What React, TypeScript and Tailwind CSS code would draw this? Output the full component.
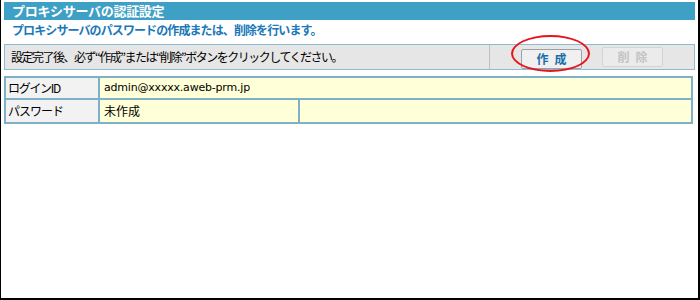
import React from 'react';

export default function App() {
  const font = { fontFamily: '"Noto Sans CJK JP", "Liberation Sans", sans-serif' };

  return (
    <div className="w-[700px] h-[300px] bg-white border-l border-r-2 border-b-2 border-black overflow-hidden" style={font}>
      <div className="pl-[3px] pr-[3px] pt-[2px]">
        {/* Title bar */}
        <div className="h-[18px] bg-[#3fa0c6] text-white font-bold text-[13px] leading-[18px] pl-[8px] tracking-[-0.3px]">
          プロキシサーバの認証設定
        </div>
        <div className="text-[#1a78b8] font-bold text-[12px] leading-[16px] pl-[8px] mt-[2px] tracking-[-0.9px]">
          プロキシサーバのパスワードの作成または、削除を行います。
        </div>

        {/* Action bar */}
        <div className="mt-[6px] h-[26px] bg-[#e6e6e6] border border-[#8cbccf] flex items-stretch">
          <div className="flex-1 flex items-center pl-[6px] text-[12px] tracking-[-1.5px] text-black">
            設定完了後、必ず“作成”または“削除”ボタンをクリックしてください。
          </div>
          <div className="w-[205px] border-l border-[#bfbfbf] flex items-center pl-[31px] gap-[20px]">
            <div className="relative">
              <button className="w-[61px] h-[20px] bg-[#f0f0f0] border border-[#a0a0a0] rounded-[2px] text-[#1a6fa8] font-bold text-[12px] tracking-[6px] pl-[6px] leading-none">
                作成
              </button>
              <div className="absolute left-[-10px] top-[-10px] w-[79px] h-[37px] rounded-[50%] border-2 border-[#e8141c] pointer-events-none" />
            </div>
            <button className="w-[61px] h-[20px] bg-[#ebebeb] border border-[#d4d4d4] rounded-[2px] text-[#c4c4c4] font-bold text-[12px] tracking-[6px] pl-[6px] leading-none">
              削除
            </button>
          </div>
        </div>

        {/* Table */}
        <div className="mt-[6px] w-[689px] border-2 border-[#7eb0c8] text-[12px] text-black">
          <div className="flex h-[22px] border-b-2 border-[#7eb0c8]">
            <div className="w-[94px] bg-[#f2f2f2] border-r-2 border-[#7eb0c8] pl-[2px] flex items-center tracking-[-1.3px]">ログインID</div>
            <div className="flex-1 bg-[#ffffd8] pl-[4px] flex items-center text-[11px]" style={{ fontFamily: '"DejaVu Sans", sans-serif', letterSpacing: '-0.2px' }}>
              admin@xxxxx.aweb-prm.jp
            </div>
          </div>
          <div className="flex h-[22px]">
            <div className="w-[94px] bg-[#f2f2f2] border-r-2 border-[#7eb0c8] pl-[2px] flex items-center tracking-[-1px]">パスワード</div>
            <div className="w-[200px] bg-[#ffffd8] border-r-2 border-[#7eb0c8] pl-[4px] flex items-center">未作成</div>
            <div className="flex-1 bg-[#ffffd8]" />
          </div>
        </div>
      </div>
    </div>
  );
}
